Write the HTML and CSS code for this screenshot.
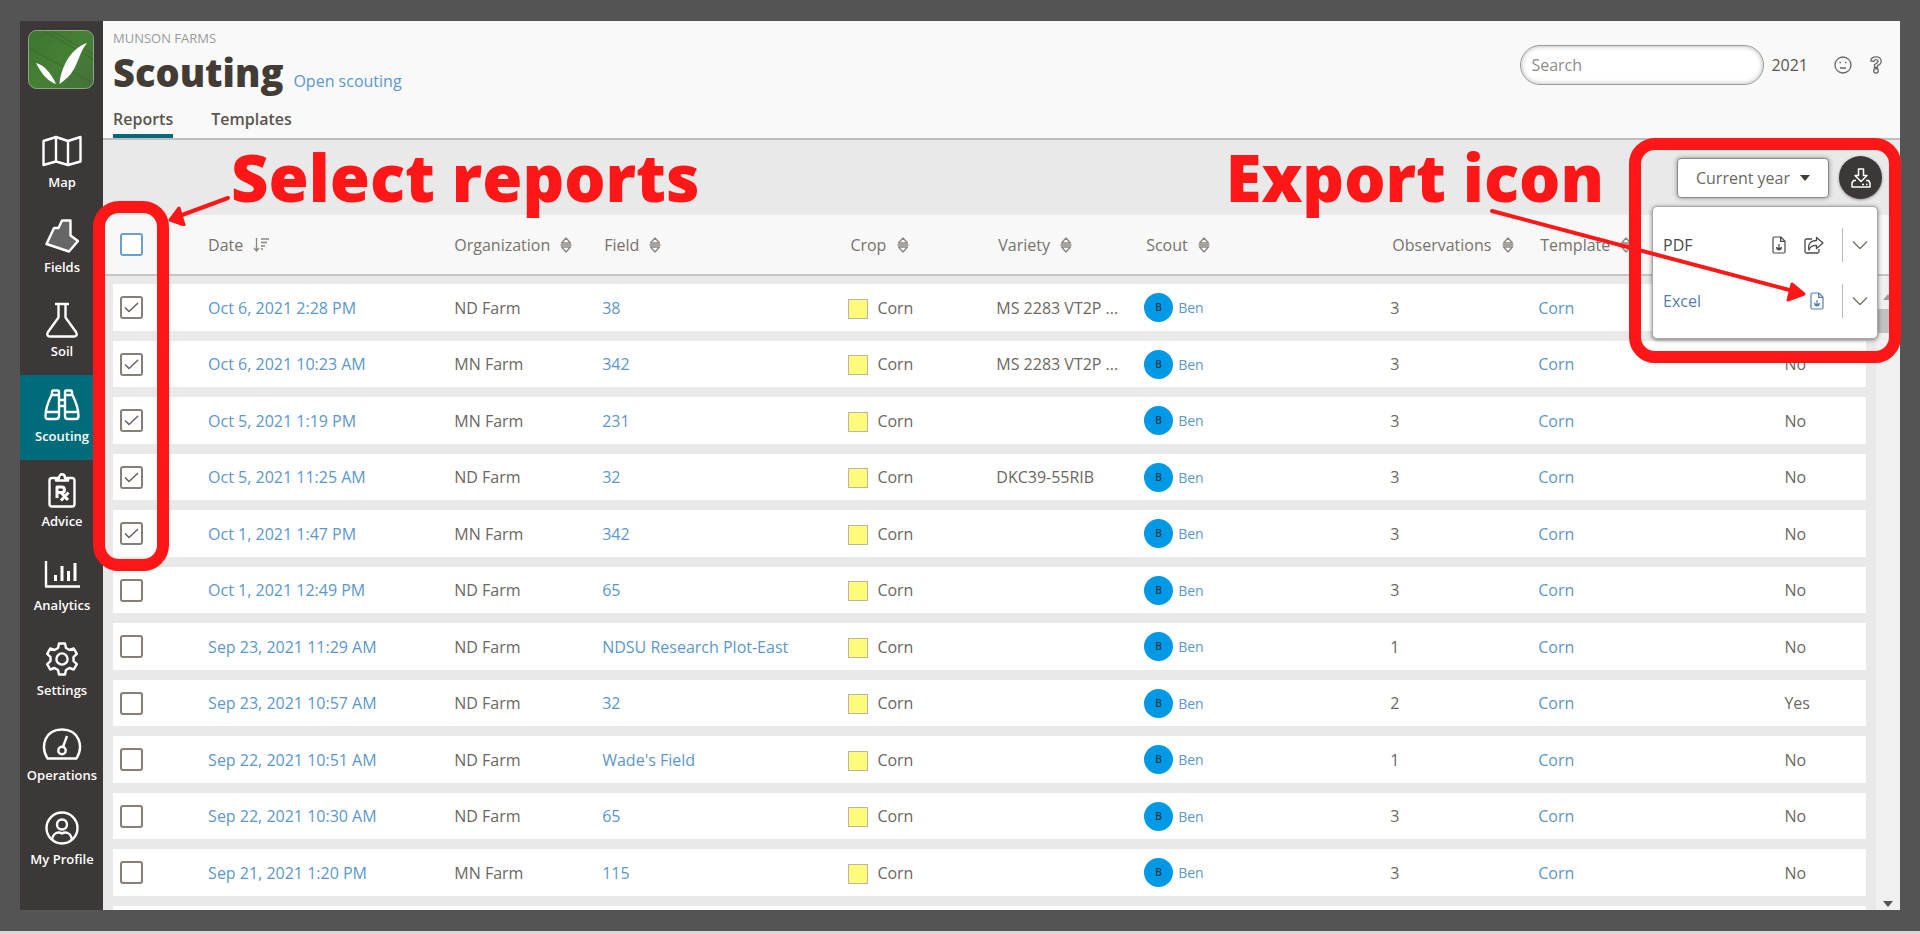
FILE: index.html
```html
<!DOCTYPE html>
<html lang="en">
<head>
    <meta charset="UTF-8">
    <meta name="viewport" content="width=device-width, initial-scale=1.0">
    <title>Scouting</title>
    <link rel="stylesheet" href="styles.css">
</head>
<body>
    <svg class="symbols" width="0" height="0">
        <symbol id="sort" viewBox="0 0 12 16">
            <path d="M1.500 6 6 1l4.500 5zM.5 8h11M1.500 10h9L6 15z" fill="none" stroke="#8a857f" stroke-width="1.300" stroke-linejoin="round"/>
        </symbol>
        <symbol id="file-down" viewBox="0 0 14 18">
            <path d="M2.500 1h6.300L13 5.200v10.300c0 .9-.6 1.500-1.500 1.500h-9C1.600 17 1 16.400 1 15.500v-13C1 1.600 1.600 1 2.500 1zM8.600 1v4.400H13M7 8v5.500M4.500 11.500c.3 1.500 1.200 2.500 2.500 2.500s2.200-1 2.500-2.500L7 13z" fill="none" stroke="currentColor" stroke-width="1.200" stroke-linejoin="round"/>
        </symbol>
        <symbol id="chevron" viewBox="0 0 16 10">
            <path d="m1 1.500 7 7 7-7" fill="none" stroke="#77726c" stroke-width="1.400"/>
        </symbol>
    </svg>

    <div class="frame">
        <aside class="sidebar">
            <a href="#" class="logo" aria-label="Home">
                <svg viewBox="0 0 66 59">
                    <defs>
                        <linearGradient id="grass" x1="0" y1="0" x2="1" y2="1">
                            <stop offset="0" stop-color="#3f7330"/>
                            <stop offset=".5" stop-color="#458034"/>
                            <stop offset="1" stop-color="#44703b"/>
                        </linearGradient>
                    </defs>
                    <rect x=".5" y=".5" width="65" height="58" rx="8" fill="url(#grass)" stroke="#8fa58a"/>
                    <path d="m16 1 49 28M24 1l41 23M1 18l62 34" stroke="#2f5f28" stroke-width="1" opacity=".5"/>
                    <path d="M8 33c8 2 15 10 20 21-7-2-14-9-20-21z" fill="#fff"/>
                    <path d="M31.500 54C33 37 43 18 59 13c-7 9-8 17-13 26-4 7-9 11-14.500 15z" fill="#fff"/>
                </svg>
            </a>
            <nav class="nav">
                <a href="#" class="nav-item">
                    <svg width="40" height="34" viewBox="0 0 40 34"><path d="M1.500 7 14 3l12 4 12.500-4v24.500L26 31l-12-3.500L1.500 31zM14 3v24.500M26 7v24"/></svg>
                    <span>Map</span>
                </a>
                <a href="#" class="nav-item">
                    <svg width="34" height="34" viewBox="0 0 34 34"><path d="M17 1.500h8.500v15L33 22l-9 10.500L1.500 25l7.500-16h4.500z" fill="#666"/></svg>
                    <span>Fields</span>
                </a>
                <a href="#" class="nav-item">
                    <svg width="34" height="36" viewBox="0 0 34 36"><path d="M10 2h14M13.500 2v13.500L3 30c-1.500 2.500-.5 4.500 2 4.500h24c2.500 0 3.500-2 2-4.500L20.500 15.500V2"/></svg>
                    <span>Soil</span>
                </a>
                <a href="#" class="nav-item active">
                    <svg width="36" height="34" viewBox="0 0 36 34"><path d="M8 6V4c0-1 .5-1.500 1.500-1.500h4c1 0 1.500.5 1.500 1.500v24c0 2-1 3-3 3H4c-2 0-2.500-1-2.500-3C1.500 20 4.500 13 8 6zM28 6V4c0-1-.5-1.500-1.500-1.500h-4c-1 0-1.500.5-1.500 1.500v24c0 2 1 3 3 3h8c2 0 2.500-1 2.500-3 0-8-3-15-6.500-22zM8 7h7M21 7h7M15 12h6M15 18h6M2 24h13M21 24h13"/></svg>
                    <span>Scouting</span>
                </a>
                <a href="#" class="nav-item">
                    <svg width="28" height="36" viewBox="0 0 28 36"><path d="M8 6H4C2.500 6 1.500 7 1.500 8.500V32c0 1.500 1 2.500 2.500 2.500h20c1.500 0 2.500-1 2.500-2.500V8.500C26.500 7 25.500 6 24 6h-4M8 8.500V6h3c0-5 6-5 6 0h3v2.500z"/><path d="M9 26V15h4.500c4 0 4 5.500 0 5.500H9M13 20.500l7 7.500M20.500 20.500 13 28.500" stroke-width="3"/></svg>
                    <span>Advice</span>
                </a>
                <a href="#" class="nav-item">
                    <svg width="36" height="32" viewBox="0 0 36 32"><path d="M2 3v25.500h34"/><path d="M11.500 17v6M18 8v15M24.500 13v10M31 5v18" stroke-width="3"/></svg>
                    <span>Analytics</span>
                </a>
                <a href="#" class="nav-item">
                    <svg width="34" height="34" viewBox="0 0 34 34"><path d="M14 1.500h6l1 4.500 3.500 2 4.300-1.500 3 5.300-3.300 3.200v4l3.300 3.200-3 5.300-4.300-1.500L21 28l-1 4.500h-6L13 28l-3.500-2-4.300 1.500-3-5.300L5.500 19v-4l-3.300-3.200 3-5.300L9.500 8 13 6z"/><circle cx="17" cy="17" r="5.600"/></svg>
                    <span>Settings</span>
                </a>
                <a href="#" class="nav-item">
                    <svg width="40" height="34" viewBox="0 0 40 34"><path d="M5.500 31.500C-2 19 3 2.500 20 2.500S42 19 34.500 31.500zM21 20l4-11"/><circle cx="20" cy="23.500" r="3.700"/></svg>
                    <span>Operations</span>
                </a>
                <a href="#" class="nav-item">
                    <svg width="34" height="34" viewBox="0 0 34 34"><circle cx="17" cy="17" r="15.500"/><circle cx="17" cy="13.500" r="5"/><path d="M7 29c1-8 7-8.500 10-6.500 3-2 9-1.500 10 6.500"/></svg>
                    <span>My Profile</span>
                </a>
            </nav>
        </aside>

        <main class="main">
            <header class="header">
                <div class="heading">
                    <div class="farm">MUNSON FARMS</div>
                    <div class="title-row">
                        <h1>Scouting</h1>
                        <a href="#">Open scouting</a>
                    </div>
                    <div class="tabs">
                        <a href="#" class="tab active">Reports</a>
                        <a href="#" class="tab">Templates</a>
                    </div>
                </div>
                <div class="tools">
                    <input type="search" class="search" placeholder="Search" aria-label="Search">
                    <span class="year">2021</span>
                    <button type="button" class="icon-btn" aria-label="Feedback">
                        <svg width="18" height="18" viewBox="0 0 18 18"><circle cx="9" cy="9" r="8"/><path d="M6 12h6M5.500 6.500h1.500M11 6.500h1.500"/></svg>
                    </button>
                    <button type="button" class="icon-btn" aria-label="Help">
                        <svg width="12" height="18" viewBox="0 0 12 18"><path d="M.8 5C.8 2.300 3 .8 6 .8s5.200 1.700 5.200 4.400c0 2.500-1.700 3.600-3.700 4.500v1.600h-3V8.500C6.500 7.700 8 6.800 8 5.300c0-2.200-4-2.200-4.200.2z"/><circle cx="6" cy="14.800" r="2.300"/></svg>
                    </button>
                </div>
            </header>

            <div class="toolbar">
                <button type="button" class="range">Current year<i class="caret"></i></button>
                <button type="button" class="export" aria-label="Export">
                    <svg width="20" height="20" viewBox="0 0 20 20"><path d="M7.500 1h5v6.500h3.500L10 13.500 4 7.500h3.500zM5 12.500H2.500L1 15v4h18v-4l-1.500-2.500H15M11 16.500h2M15 16.500h1.500"/></svg>
                </button>
                <div class="menu">
                    <div class="menu-row">
                        <span class="menu-name">PDF</span>
                        <button type="button" aria-label="Download PDF"><svg width="14" height="18"><use href="#file-down"/></svg></button>
                        <button type="button" aria-label="Share PDF">
                            <svg width="20" height="18" viewBox="0 0 20 18"><path d="M8 3H2.500C1.500 3 1 3.500 1 4.500v11c0 1 .5 1.500 1.500 1.500h11c1 0 1.500-.5 1.500-1.500V13M12.500 1.500 19 7l-6.500 5.500V9.300c-4 0-6.500 1-7.500 4.700-1.500-6.500 2-9.500 7.500-9.500z" fill="none" stroke="currentColor" stroke-width="1.300" stroke-linejoin="round"/></svg>
                        </button>
                        <button type="button" class="more" aria-label="PDF options"><svg width="16" height="10"><use href="#chevron"/></svg></button>
                    </div>
                    <div class="menu-row blue">
                        <span class="menu-name">Excel</span>
                        <button type="button" aria-label="Download Excel"><svg width="14" height="18"><use href="#file-down"/></svg></button>
                        <button type="button" class="more" aria-label="Excel options"><svg width="16" height="10"><use href="#chevron"/></svg></button>
                    </div>
                </div>
            </div>

            <div class="list">
                <table class="reports">
                    <colgroup>
                        <col class="c-check"><col class="c-wide"><col class="c-slim"><col class="c-wide"><col class="c-slim">
                        <col class="c-slim"><col class="c-wide"><col class="c-slim"><col class="c-wide"><col>
                    </colgroup>
                    <thead>
                        <tr>
                            <th><input type="checkbox" aria-label="Select all"></th>
                            <th>Date <svg width="16" height="16" viewBox="0 0 16 16"><path d="M3.500 1v13M1 11l2.500 3L6 11M8 2h8M8 5.500h6M8 9h4M8 12h2" fill="none" stroke="#8a857f" stroke-width="1.300"/></svg></th>
                            <th>Organization <svg width="12" height="16"><use href="#sort"/></svg></th>
                            <th>Field <svg width="12" height="16"><use href="#sort"/></svg></th>
                            <th>Crop <svg width="12" height="16"><use href="#sort"/></svg></th>
                            <th>Variety <svg width="12" height="16"><use href="#sort"/></svg></th>
                            <th>Scout <svg width="12" height="16"><use href="#sort"/></svg></th>
                            <th>Observations <svg width="12" height="16"><use href="#sort"/></svg></th>
                            <th>Template <svg width="12" height="16"><use href="#sort"/></svg></th>
                            <th></th>
                        </tr>
                    </thead>
                    <tbody>
                        <tr>
                            <td><input type="checkbox" aria-label="Select report" checked></td>
                            <td><a href="#">Oct 6, 2021 2:28 PM</a></td><td>ND Farm</td><td><a href="#">38</a></td>
                            <td><i class="swatch"></i>Corn</td><td>MS 2283 VT2P ...</td>
                            <td><a href="#" class="scout"><b>B</b>Ben</a></td><td>3</td><td><a href="#">Corn</a></td><td></td>
                        </tr>
                        <tr>
                            <td><input type="checkbox" aria-label="Select report" checked></td>
                            <td><a href="#">Oct 6, 2021 10:23 AM</a></td><td>MN Farm</td><td><a href="#">342</a></td>
                            <td><i class="swatch"></i>Corn</td><td>MS 2283 VT2P ...</td>
                            <td><a href="#" class="scout"><b>B</b>Ben</a></td><td>3</td><td><a href="#">Corn</a></td><td>No</td>
                        </tr>
                        <tr>
                            <td><input type="checkbox" aria-label="Select report" checked></td>
                            <td><a href="#">Oct 5, 2021 1:19 PM</a></td><td>MN Farm</td><td><a href="#">231</a></td>
                            <td><i class="swatch"></i>Corn</td><td></td>
                            <td><a href="#" class="scout"><b>B</b>Ben</a></td><td>3</td><td><a href="#">Corn</a></td><td>No</td>
                        </tr>
                        <tr>
                            <td><input type="checkbox" aria-label="Select report" checked></td>
                            <td><a href="#">Oct 5, 2021 11:25 AM</a></td><td>ND Farm</td><td><a href="#">32</a></td>
                            <td><i class="swatch"></i>Corn</td><td>DKC39-55RIB</td>
                            <td><a href="#" class="scout"><b>B</b>Ben</a></td><td>3</td><td><a href="#">Corn</a></td><td>No</td>
                        </tr>
                        <tr>
                            <td><input type="checkbox" aria-label="Select report" checked></td>
                            <td><a href="#">Oct 1, 2021 1:47 PM</a></td><td>MN Farm</td><td><a href="#">342</a></td>
                            <td><i class="swatch"></i>Corn</td><td></td>
                            <td><a href="#" class="scout"><b>B</b>Ben</a></td><td>3</td><td><a href="#">Corn</a></td><td>No</td>
                        </tr>
                        <tr>
                            <td><input type="checkbox" aria-label="Select report"></td>
                            <td><a href="#">Oct 1, 2021 12:49 PM</a></td><td>ND Farm</td><td><a href="#">65</a></td>
                            <td><i class="swatch"></i>Corn</td><td></td>
                            <td><a href="#" class="scout"><b>B</b>Ben</a></td><td>3</td><td><a href="#">Corn</a></td><td>No</td>
                        </tr>
                        <tr>
                            <td><input type="checkbox" aria-label="Select report"></td>
                            <td><a href="#">Sep 23, 2021 11:29 AM</a></td><td>ND Farm</td><td><a href="#">NDSU Research Plot-East</a></td>
                            <td><i class="swatch"></i>Corn</td><td></td>
                            <td><a href="#" class="scout"><b>B</b>Ben</a></td><td>1</td><td><a href="#">Corn</a></td><td>No</td>
                        </tr>
                        <tr>
                            <td><input type="checkbox" aria-label="Select report"></td>
                            <td><a href="#">Sep 23, 2021 10:57 AM</a></td><td>ND Farm</td><td><a href="#">32</a></td>
                            <td><i class="swatch"></i>Corn</td><td></td>
                            <td><a href="#" class="scout"><b>B</b>Ben</a></td><td>2</td><td><a href="#">Corn</a></td><td>Yes</td>
                        </tr>
                        <tr>
                            <td><input type="checkbox" aria-label="Select report"></td>
                            <td><a href="#">Sep 22, 2021 10:51 AM</a></td><td>ND Farm</td><td><a href="#">Wade's Field</a></td>
                            <td><i class="swatch"></i>Corn</td><td></td>
                            <td><a href="#" class="scout"><b>B</b>Ben</a></td><td>1</td><td><a href="#">Corn</a></td><td>No</td>
                        </tr>
                        <tr>
                            <td><input type="checkbox" aria-label="Select report"></td>
                            <td><a href="#">Sep 22, 2021 10:30 AM</a></td><td>ND Farm</td><td><a href="#">65</a></td>
                            <td><i class="swatch"></i>Corn</td><td></td>
                            <td><a href="#" class="scout"><b>B</b>Ben</a></td><td>3</td><td><a href="#">Corn</a></td><td>No</td>
                        </tr>
                        <tr>
                            <td><input type="checkbox" aria-label="Select report"></td>
                            <td><a href="#">Sep 21, 2021 1:20 PM</a></td><td>MN Farm</td><td><a href="#">115</a></td>
                            <td><i class="swatch"></i>Corn</td><td></td>
                            <td><a href="#" class="scout"><b>B</b>Ben</a></td><td>3</td><td><a href="#">Corn</a></td><td>No</td>
                        </tr>
                        <tr><td></td><td></td><td></td><td></td><td></td><td></td><td></td><td></td><td></td><td></td></tr>
                    </tbody>
                </table>
                <div class="scrollbar">
                    <i class="up"></i>
                    <i class="thumb"></i>
                    <i class="down"></i>
                </div>
            </div>
        </main>

        <!-- callouts -->
        <div class="callout callout-select"></div>
        <div class="callout callout-export"></div>
        <div class="note note-select">Select reports</div>
        <div class="note note-export">Export icon</div>
        <svg class="arrow arrow-select" width="66" height="34" viewBox="0 0 66 34">
            <path d="M62 6 16 23" stroke-width="4"/>
            <path d="m4 28 9-12 5 17z" class="head"/>
        </svg>
        <svg class="arrow arrow-export" width="320" height="96" viewBox="0 0 320 96">
            <path d="m4 4 301 80" stroke-width="4"/>
            <path d="m316 87-12-10-4 16z" class="head"/>
        </svg>
    </div>
</body>
</html>
```
FILE: styles.css
```css
* {
    box-sizing: border-box;
}

body {
    margin: 0;
    min-height: 100vh;
    padding: 21px 20px;
    background-color: #545454;
    border-bottom: 3px solid #d9d9d9;
    font-family: "Open Sans", sans-serif;
    font-size: 16px;
    color: #6b6762;
}

a {
    color: #5b97cc;
    text-decoration: none;
}

button {
    font-family: inherit;
    font-size: 16px;
    color: inherit;
    padding: 0;
    border: none;
    background: none;
    cursor: pointer;
}

svg {
    display: block;
}

.symbols {
    position: absolute;
}

.frame {
    position: relative;
    display: flex;
    height: calc(100vh - 45px);
}

/* Sidebar */
.sidebar {
    display: flex;
    flex-direction: column;
    width: 83px;
    flex-shrink: 0;
    padding: 9px 0 27px;
    background-color: #3c3837;
}

.logo {
    width: 66px;
    height: 59px;
    margin: 0 8px 32px;
}

.nav {
    flex: 1;
    display: flex;
    flex-direction: column;
}

.nav-item {
    flex: 1;
    display: flex;
    flex-direction: column;
    align-items: center;
    padding-left: 1px;
    color: #fff;
    font-size: 13px;
    font-weight: 600;
    line-height: 18px;
    white-space: nowrap;
}

.nav-item svg {
    height: 36px;
    margin: 12px 0 4px;
    fill: none;
    stroke: #fff;
    stroke-width: 2.4;
    stroke-linejoin: round;
}

.nav-item.active {
    background-color: #006b7a;
}

/* Header */
.main {
    flex: 1;
    display: flex;
    flex-direction: column;
    min-width: 0;
    background-color: #e9e9e9;
}

.header {
    display: flex;
    justify-content: space-between;
    height: 119px;
    padding: 0 18px 0 10px;
    background-color: #f9f9f9;
    border-bottom: 2px solid #bdbdbd;
}

.farm {
    margin-top: 8px;
    font-size: 13px;
    line-height: 18px;
    color: #999;
}

.title-row {
    display: flex;
    align-items: baseline;
    gap: 10px;
    height: 58px;
    padding-top: 2px;
}

h1 {
    margin: 0;
    font-size: 38px;
    line-height: 46px;
    font-weight: 800;
    color: #423c35;
}

.tabs {
    display: flex;
    gap: 38px;
}

.tab {
    height: 33px;
    line-height: 28px;
    font-weight: 600;
    color: #5a554f;
}

.tab.active {
    border-bottom: 4px solid #006b7a;
}

.tools {
    display: flex;
    align-items: center;
    height: 40px;
    margin-top: 24px;
}

.search {
    width: 244px;
    height: 40px;
    padding: 0 10px;
    border: 1px solid #999;
    border-radius: 20px;
    background-color: #fff;
    box-shadow: inset 0 0 5px rgba(0, 0, 0, 0.3);
    font-family: inherit;
    font-size: 16px;
}

.search::placeholder {
    color: #8c8c8c;
}

.year {
    margin: 0 26px 0 7px;
    color: #5a554f;
}

.icon-btn {
    margin-right: 18px;
}

.icon-btn:last-child {
    margin-right: 0;
}

.icon-btn svg {
    fill: none;
    stroke: #6b6762;
    stroke-width: 1.3;
}

/* Toolbar */
.toolbar {
    position: relative;
    display: flex;
    justify-content: flex-end;
    align-items: center;
    gap: 10px;
    height: 75px;
    padding-right: 18px;
}

.range {
    width: 152px;
    height: 40px;
    border: 1px solid #888;
    border-radius: 4px;
    background-color: #fff;
    box-shadow: 0 0 5px rgba(0, 0, 0, 0.4);
}

.caret {
    display: inline-block;
    margin-left: 10px;
    vertical-align: 3px;
    border: 5px solid transparent;
    border-top: 6px solid #423c35;
    border-bottom: none;
}

.export {
    display: flex;
    align-items: center;
    justify-content: center;
    width: 43px;
    height: 43px;
    border-radius: 50%;
    background-color: #3c3837;
    box-shadow: 0 1px 3px rgba(0, 0, 0, 0.4);
}

.export svg {
    fill: none;
    stroke: #fff;
    stroke-width: 1.5;
    stroke-linejoin: round;
}

.menu {
    position: absolute;
    top: 66px;
    right: 22px;
    z-index: 2;
    width: 226px;
    height: 133px;
    padding: 10px 0;
    border: 1px solid #aaa;
    border-radius: 5px;
    background-color: #fff;
    box-shadow: 0 1px 4px rgba(0, 0, 0, 0.5);
}

.menu-row {
    display: flex;
    align-items: center;
    gap: 18px;
    height: 56px;
    padding-left: 10px;
    color: #4a4a4a;
}

.menu-row.blue {
    color: #5580ab;
}

.menu-name {
    flex: 1;
}

.more {
    height: 34px;
    padding: 0 9px;
    border-left: 1px solid #bbb;
}

/* Reports table */
.list {
    position: relative;
    flex: 1;
    min-height: 0;
    overflow: hidden;
}

.reports {
    width: 100%;
    table-layout: fixed;
    border-collapse: separate;
    border-spacing: 0;
}

.c-check {
    width: 5.85%;
}

.c-wide {
    width: 13.7%;
}

.c-slim {
    width: 8.23%;
}

th,
td {
    padding: 0;
    text-align: left;
    white-space: nowrap;
}

th {
    height: 61px;
    padding-left: 2px;
    background-color: #f8f8f8;
    border-bottom: 2px solid #c4c4c4;
    font-weight: 400;
    color: #77726c;
}

th:nth-child(-n+3) {
    padding-left: 0;
}

th:first-child {
    padding-left: 17px;
}

th svg {
    display: inline-block;
    margin-left: 6px;
    vertical-align: -2px;
}

td {
    height: 57px;
    background-color: #fff;
    border-bottom: 10px solid #e9e9e9;
}

tr:nth-child(even) td {
    height: 56px;
}

tbody tr:first-child td {
    height: 65px;
    border-top: 8px solid #e9e9e9;
}

td:first-child {
    padding-left: 7px;
    border-left: 10px solid #e9e9e9;
}

td:last-child {
    border-right: 34px solid #e9e9e9;
}

input[type="checkbox"] {
    display: block;
    appearance: none;
    width: 23px;
    height: 23px;
    margin: 0;
    border: 2px solid #857f78;
    border-radius: 3px;
    background: #fff center / 15px 11px no-repeat;
}

input[type="checkbox"]:checked {
    background-image: url("data:image/svg+xml,%3Csvg xmlns='http://www.w3.org/2000/svg' viewBox='0 0 15 11'%3E%3Cpath d='M1 5.500 5 9.500 14 1' fill='none' stroke='%23665f57' stroke-width='1.500'/%3E%3C/svg%3E");
}

th input[type="checkbox"] {
    border-color: #6c9fd0;
}

.swatch {
    display: inline-block;
    width: 20px;
    height: 20px;
    margin-right: 9px;
    vertical-align: -5px;
    border: 1px solid #b9b7a0;
    background-color: #fffa7a;
}

.scout {
    display: flex;
    align-items: center;
    gap: 5px;
    font-size: 14px;
}

.scout b {
    width: 29px;
    height: 29px;
    border-radius: 50%;
    background-color: #0099e5;
    color: #1d3a4d;
    font-size: 10px;
    font-weight: 600;
    line-height: 29px;
    text-align: center;
}

.scrollbar {
    position: absolute;
    top: 61px;
    right: 0;
    bottom: 0;
    display: flex;
    flex-direction: column;
    align-items: center;
    width: 24px;
    background-color: #f0f0f0;
}

.up {
    margin: 18px 0 9px;
    border: 5px solid transparent;
    border-top: none;
    border-bottom: 6px solid #999;
}

.thumb {
    width: 24px;
    height: 24px;
    background-color: #c1c1c1;
}

.down {
    margin: auto 0 3px;
    border: 5px solid transparent;
    border-top: 6px solid #545454;
    border-bottom: none;
}

/* Callouts drawn over the page */
.callout {
    position: absolute;
    z-index: 3;
    border: 12px solid #ff1616;
    border-radius: 26px;
    pointer-events: none;
}

.callout-select {
    top: 180px;
    left: 73px;
    width: 76px;
    height: 370px;
}

.callout-export {
    top: 117px;
    right: -1px;
    width: 272px;
    height: 225px;
}

.note {
    position: absolute;
    z-index: 3;
    top: 111px;
    font-size: 65px;
    line-height: 90px;
    font-weight: 800;
    color: #ff1616;
    white-space: nowrap;
}

.note-select {
    left: 211px;
}

.note-export {
    right: 296px;
}

.arrow {
    position: absolute;
    z-index: 3;
    fill: none;
    stroke: #ff1616;
    stroke-linecap: round;
    stroke-linejoin: round;
}

.arrow .head {
    fill: #ff1616;
    stroke-width: 3;
}

.arrow-select {
    top: 171px;
    left: 146px;
}

.arrow-export {
    top: 186px;
    right: 92px;
}
```
